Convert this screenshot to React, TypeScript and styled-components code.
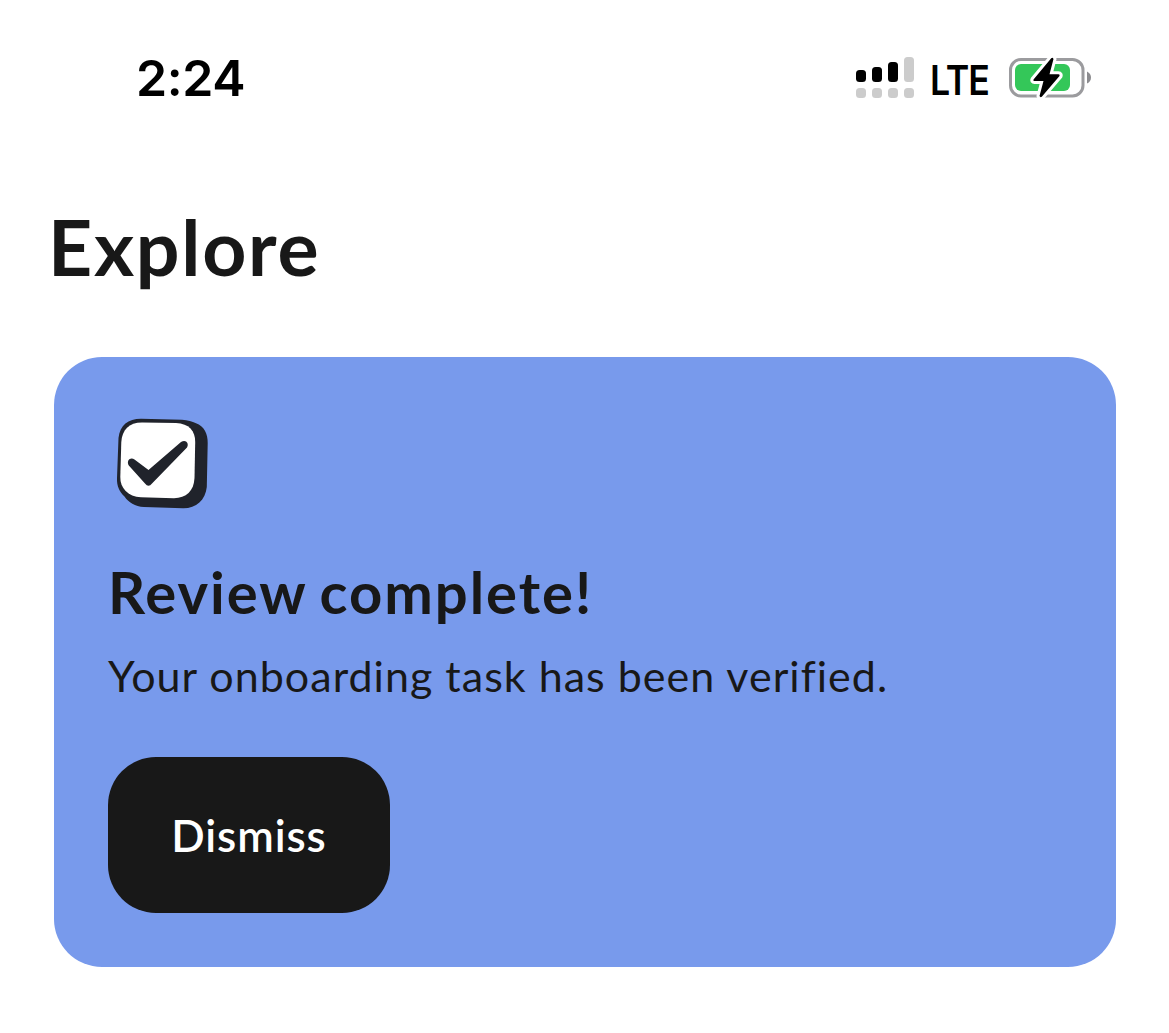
import styled, { createGlobalStyle } from 'styled-components';

const GlobalStyle = createGlobalStyle`
	* {
		box-sizing: border-box;
	}

	body {
		margin: 0;
		background: #fff;
		color: #181818;
		font-family: Lato, "Liberation Sans", sans-serif;
	}
`;

const Screen = styled.div`
	width: 1169px;
	height: 1033px;
	background: #fff;
	overflow: hidden;
`;

const StatusBar = styled.header`
	display: flex;
	align-items: center;
	justify-content: space-between;
	height: 156px;
	padding: 0 78px 0 136px;
	color: #000;
	font-family: Inter, "Liberation Sans", sans-serif;
`;

const Time = styled.time`
	font-size: 50px;
	font-weight: 600;
	line-height: 60px;
	letter-spacing: -0.4px;
`;

const StatusIcons = styled.div`
	display: flex;
	align-items: center;
	height: 60px;
`;

const Network = styled.span`
	width: 62px;
	margin: 3px 17px 0 16px;
	font-size: 41px;
	font-weight: 600;
	line-height: 48px;
	letter-spacing: -1.2px;
	white-space: nowrap;
	transform: scaleX(0.87);
	transform-origin: left;
`;

const PageTitle = styled.h1`
	margin: 44px 0 0 48px;
	font-size: 77px;
	font-weight: 700;
	line-height: 92px;
	letter-spacing: 1.7px;
`;

const Card = styled.section`
	display: flex;
	flex-direction: column;
	align-items: flex-start;
	width: 1062px;
	height: 610px;
	margin: 65px 0 0 54px;
	padding: 54px;
	border-radius: 48px;
	background: #789aec;
`;

const CardTitle = styled.h2`
	margin: 38px 0 0;
	font-size: 58px;
	font-weight: 700;
	line-height: 70px;
	letter-spacing: 1.95px;
	word-spacing: -3px;
`;

const CardText = styled.p`
	margin: 17px 0 49px;
	font-size: 43px;
	font-weight: 400;
	line-height: 64px;
	letter-spacing: 1.02px;
	white-space: nowrap;
	font-variant-ligatures: none;
`;

const DismissButton = styled.button`
	width: 282px;
	height: 156px;
	padding: 0;
	border: 0;
	border-radius: 48px;
	background: #181818;
	color: #fff;
	font: 600 44px/60px Lato, "Liberation Sans", sans-serif;
	letter-spacing: 0.9px;
`;

const signalBars = [
	{ x: 0, y: 13, height: 12, active: true },
	{ x: 16, y: 10, height: 15, active: true },
	{ x: 32, y: 5, height: 20, active: true },
	{ x: 48, y: 0, height: 25, active: false },
];

function SignalIcon() {
	return (
		<svg width="58" height="43" viewBox="0 0 58 43">
			{signalBars.map((bar) => (
				<g key={bar.x}>
					<rect
						x={bar.x}
						y={bar.y}
						width="10"
						height={bar.height}
						rx="3.5"
						fill={bar.active ? '#000' : '#ccc'}
					/>
					<rect x={bar.x} y="31" width="10" height="10" rx="3.5" fill="#ccc" />
				</g>
			))}
		</svg>
	);
}

const bolt = 'M42 1.5 L24.5 22.5 Q23.8 24 25.5 24 H34.5 L30.5 39 Q31.5 41 33 39.5 L50.5 19 Q51.2 17.3 49.5 17.3 H40.5 L44.5 2 Q43.5 0 42 1.5 Z';

function BatteryIcon() {
	return (
		<svg width="82" height="42" viewBox="0 0 82 42">
			<rect x="1.5" y="2.5" width="72.5" height="36.5" rx="10.5" fill="#fff" stroke="#9b9b9e" strokeWidth="3" />
			<path d="M78 14.5 Q82 16.5 82 20.5 T78 26.5 Z" fill="#8c8c8f" />
			<rect x="6" y="7" width="55" height="27" rx="6" fill="#34c759" />
			<path d={bolt} fill="#000" stroke="#fff" strokeWidth="6" strokeLinejoin="round" />
			<path d={bolt} fill="#000" />
		</svg>
	);
}

function CheckIcon() {
	return (
		<svg width="108" height="108" viewBox="0 0 108 108">
			<path
				d="M33 7.7 L74 8.8 C80 9 84 10.5 88 12.3 C96 15 100 23 99.7 32 L98.8 76 C97.5 89 88 97.5 75 97.3 L36 96 C27 95.5 20.5 91.5 16.5 85.5 C11.5 81 8.7 75 9 67 L10.5 27 C12 14 20 7.7 33 7.7 Z"
				fill="#20232b"
			/>
			<path
				d="M34 11.5 L68 12 C81 12.5 87.3 20 87.2 31 L86.5 67 C86 80 78 87.2 66 87.2 L33 86.3 C20 85.8 12 77 12.3 66 L13.3 31 C14 19 21 11.5 34 11.5 Z"
				fill="#fff"
			/>
			<path
				d="M20.8 54.5 C18 49.5 22.5 45.5 26.5 48.5 L40.5 59 L73 31 C77.5 27.8 81.5 32 79 36.5 L44 72.5 Q40.5 77 37 72.5 Z"
				fill="#20232b"
			/>
		</svg>
	);
}

export default function App() {
	return (
		<Screen>
			<GlobalStyle />
			<StatusBar>
				<Time>2:24</Time>
				<StatusIcons>
					<SignalIcon />
					<Network>LTE</Network>
					<BatteryIcon />
				</StatusIcons>
			</StatusBar>
			<main>
				<PageTitle>Explore</PageTitle>
				<Card>
					<CheckIcon />
					<CardTitle>Review complete!</CardTitle>
					<CardText>Your onboarding task has been verified.</CardText>
					<DismissButton type="button">Dismiss</DismissButton>
				</Card>
			</main>
		</Screen>
	);
}
